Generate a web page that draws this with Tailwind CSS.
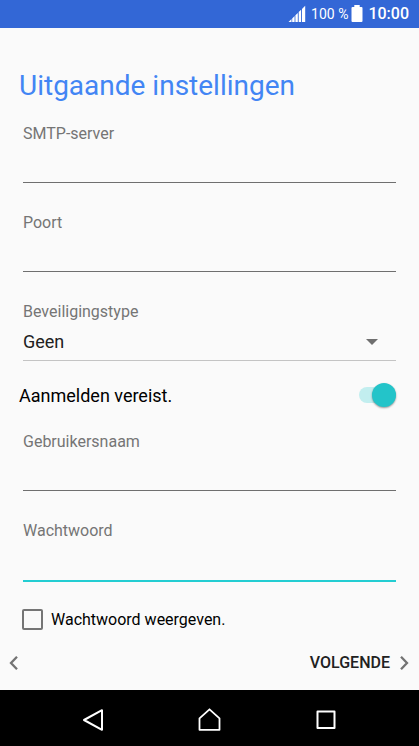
<!DOCTYPE html>
<html lang="nl">
<head>
<meta charset="utf-8">
<meta name="viewport" content="width=device-width, initial-scale=1">
<title>Uitgaande instellingen</title>
<script src="https://cdn.jsdelivr.net/npm/@tailwindcss/browser@4"></script>
</head>
<body class="flex min-h-screen flex-col bg-[#fafafa] font-[Roboto,sans-serif] text-base leading-6 text-black">
  <header class="flex h-7 shrink-0 items-center justify-end bg-[#3367d6] pr-[10px] text-white">
    <svg class="mr-[5px] h-[18px] w-[18px]" viewBox="0 0 18 18" fill="currentColor" aria-hidden="true">
      <path d="M0.500 17L3.500 14.100V17zM4.200 17V13.400L6.600 11.100V17zM7.400 17V10.300L9.800 8V17zM10.700 17V7.100L13.100 4.800V17zM14 17V3.900L17.200 0.800V17z"/>
    </svg>
    <span class="text-sm">100 %</span>
    <svg class="ml-[3px] mr-[5px] h-[18px] w-3" viewBox="0 0 12 18" fill="currentColor" aria-hidden="true">
      <path d="M3.300 0H8.700V2H10.500Q11.500 2 11.500 3V16Q11.500 17 10.500 17H1.500Q0.500 17 0.500 16V3Q0.500 2 1.500 2H3.300z"/>
    </svg>
    <time class="text-base font-medium">10:00</time>
  </header>

  <form class="flex flex-1 flex-col">
    <h1 class="mt-10 px-[19px] text-[28px] leading-9 text-[#4285f4]">Uitgaande instellingen</h1>

    <div class="mt-[18px] flex flex-col px-[23px]">
      <label for="smtp" class="text-[#757575]">SMTP-server</label>
      <input id="smtp" type="text" class="h-[37px] w-full border-b border-[#6f6f6f] bg-transparent outline-none">
    </div>
    <div class="mt-7 flex flex-col px-[23px]">
      <label for="port" class="text-[#757575]">Poort</label>
      <input id="port" type="text" inputmode="numeric" class="h-[37px] w-full border-b border-[#6f6f6f] bg-transparent outline-none">
    </div>
    <div class="mt-7 flex flex-col px-[23px]">
      <label for="security" class="text-[#757575]">Beveiligingstype</label>
      <div class="relative">
        <select id="security" class="block h-[37px] w-full appearance-none border-b border-[#c4c4c4] bg-transparent text-lg text-[#212121] outline-none">
          <option>Geen</option>
          <option>SSL/TLS</option>
          <option>STARTTLS</option>
        </select>
        <svg class="pointer-events-none absolute right-[18px] top-[15px] h-[6px] w-3" viewBox="0 0 12 6" aria-hidden="true"><path d="M0 0H12L6 6z" fill="#6f6f6f"/></svg>
      </div>
    </div>

    <div class="mt-[18px] flex h-8 items-center justify-between pl-[19px] pr-[23px]">
      <label for="signin" class="pt-[2px] text-lg">Aanmelden vereist.</label>
      <input id="signin" type="checkbox" role="switch" checked class="relative h-4 w-[37px] appearance-none rounded-full bg-[#bdbdbd] outline-none before:absolute before:-top-1 before:left-0 before:size-6 before:rounded-full before:bg-white before:shadow-[0_1px_2px_rgba(0,0,0,0.4)] checked:bg-[#c2eeef] checked:before:left-auto checked:before:right-0 checked:before:bg-[#23c4c9]">
    </div>

    <div class="mt-[19px] flex flex-col px-[23px]">
      <label for="user" class="text-[#757575]">Gebruikersnaam</label>
      <input id="user" type="text" class="h-[37px] w-full border-b border-[#6f6f6f] bg-transparent outline-none">
    </div>
    <div class="mt-7 flex flex-col px-[23px]">
      <label for="pass" class="text-[#757575]">Wachtwoord</label>
      <input id="pass" type="password" class="h-[39px] w-full border-b-2 border-[#23cdd2] bg-transparent outline-none">
    </div>

    <div class="mt-6 flex items-center gap-2 px-[22px]">
      <input id="show" type="checkbox" class="size-[21px] appearance-none rounded-[2px] border-2 border-[#757575] outline-none checked:bg-[#23c4c9]">
      <label for="show" class="pt-[2px]">Wachtwoord weergeven.</label>
    </div>

    <div class="mt-auto flex h-[55px] items-center justify-between pl-2 pr-[9px]">
      <button type="button" aria-label="Vorige" class="py-2">
        <svg class="h-4 w-3" viewBox="0 0 12 16" fill="none" stroke="#737373" stroke-width="2.300" aria-hidden="true"><path d="M9 1.700L3 8L9 14.300"/></svg>
      </button>
      <button type="submit" class="flex items-center gap-2 py-2 font-medium text-[#212121]">
        VOLGENDE
        <svg class="h-4 w-3" viewBox="0 0 12 16" fill="none" stroke="#737373" stroke-width="2.300" aria-hidden="true"><path d="M3 1.700L9 8L3 14.300"/></svg>
      </button>
    </div>
  </form>

  <nav class="flex h-14 shrink-0 items-center bg-black px-[35px] pt-1 text-white" aria-label="Systeem">
    <button type="button" aria-label="Terug" class="flex flex-1 justify-center">
      <svg class="size-6" viewBox="0 0 24 24" fill="none" stroke="currentColor" stroke-width="2" stroke-linejoin="round" aria-hidden="true"><path d="M3 12L21 2.200V21.800z"/></svg>
    </button>
    <button type="button" aria-label="Startscherm" class="flex flex-1 justify-center">
      <svg class="size-6" viewBox="0 0 24 24" fill="none" stroke="currentColor" stroke-width="1.800" stroke-linejoin="round" aria-hidden="true"><path d="M2.500 10.300L12.500 1.300L22.500 10.300V21.800H2.500z"/></svg>
    </button>
    <button type="button" aria-label="Recente apps" class="flex flex-1 justify-center">
      <svg class="size-6" viewBox="0 0 24 24" fill="none" stroke="currentColor" stroke-width="2" stroke-linejoin="round" aria-hidden="true"><rect x="3.500" y="3.500" width="17" height="16.500"/></svg>
    </button>
  </nav>
</body>
</html>
